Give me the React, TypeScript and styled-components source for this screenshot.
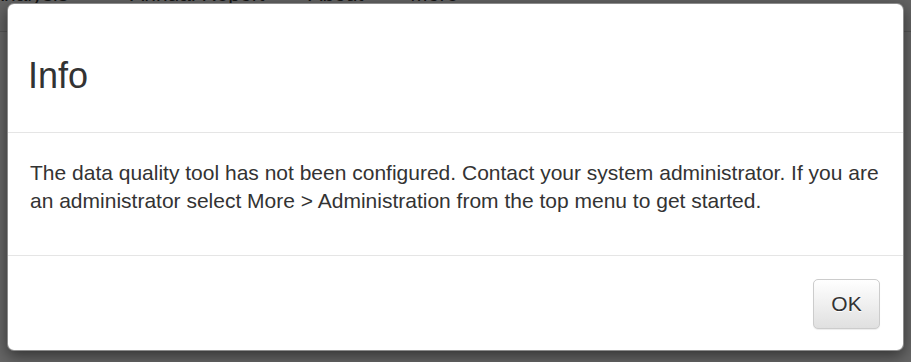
import React from "react";
import styled, { createGlobalStyle } from "styled-components";

const Global = createGlobalStyle`
  html, body { margin: 0; padding: 0; }
  body {
    width: 911px;
    height: 362px;
    overflow: hidden;
    background: #ffffff;
    font-family: "Liberation Sans", Arial, sans-serif;
    color: #333333;
  }
`;

const Page = styled.div`
  position: relative;
  width: 911px;
  height: 362px;
  overflow: hidden;
`;

const NavBar = styled.nav`
  display: flex;
  align-items: flex-start;
  height: 53px;
  margin-top: -22px;
  margin-left: -10px;
  border-bottom: 1px solid #d4d4d4;
  background: #f8f8f8;
`;

const NavItem = styled.span<{ $offset: number }>`
  margin-left: ${(p) => p.$offset}px;
  font-size: 21px;
  line-height: 31px;
  color: #333;
  white-space: nowrap;
`;

const Backdrop = styled.div`
  position: absolute;
  inset: 0;
  background: rgba(0, 0, 0, 0.6);
  display: flex;
  align-items: flex-start;
  justify-content: center;
  padding-top: 3px;
`;

const Dialog = styled.div`
  width: 895px;
  background: #ffffff;
  border: 1px solid rgba(0, 0, 0, 0.45);
  border-radius: 7px;
  box-shadow: 0 5px 15px rgba(0, 0, 0, 0.5);
  overflow: hidden;
`;

const Header = styled.div`
  padding: 52px 20px 36px;
  border-bottom: 1px solid #e5e5e5;
`;

const Title = styled.h4`
  margin: 0;
  font-size: 36px;
  font-weight: 400;
  line-height: 40px;
  color: #333;
`;

const Body = styled.div`
  padding: 26px 22px 40px;
  font-size: 21px;
  line-height: 28px;
  color: #333;
`;

const Footer = styled.div`
  display: flex;
  justify-content: flex-end;
  padding: 23px 23px 21px;
  border-top: 1px solid #e5e5e5;
`;

const Button = styled.button`
  width: 67px;
  height: 50px;
  font-family: "Liberation Sans", Arial, sans-serif;
  font-size: 21px;
  color: #333;
  background-image: linear-gradient(to bottom, #ffffff 0%, #e0e0e0 100%);
  border: 1px solid #cccccc;
  border-radius: 5px;
  text-shadow: 0 1px 0 #fff;
  box-shadow: inset 0 1px 0 rgba(255, 255, 255, 0.15), 0 1px 1px rgba(0, 0, 0, 0.075);
  padding: 0;
  cursor: pointer;
`;

const navItems = [
  { label: "Analysis", offset: 0 },
  { label: "Annual Report", offset: 62 },
  { label: "About", offset: 44 },
  { label: "More", offset: 47 },
];

export default function App() {
  return (
    <>
      <Global />
      <Page>
        <NavBar>
          {navItems.map((n) => (
            <NavItem key={n.label} $offset={n.offset}>
              {n.label}
            </NavItem>
          ))}
        </NavBar>
        <Backdrop>
          <Dialog role="dialog">
            <Header>
              <Title>Info</Title>
            </Header>
            <Body>
              The data quality tool has not been configured. Contact your system administrator. If you are
              an administrator select More &gt; Administration from the top menu to get started.
            </Body>
            <Footer>
              <Button>OK</Button>
            </Footer>
          </Dialog>
        </Backdrop>
      </Page>
    </>
  );
}
